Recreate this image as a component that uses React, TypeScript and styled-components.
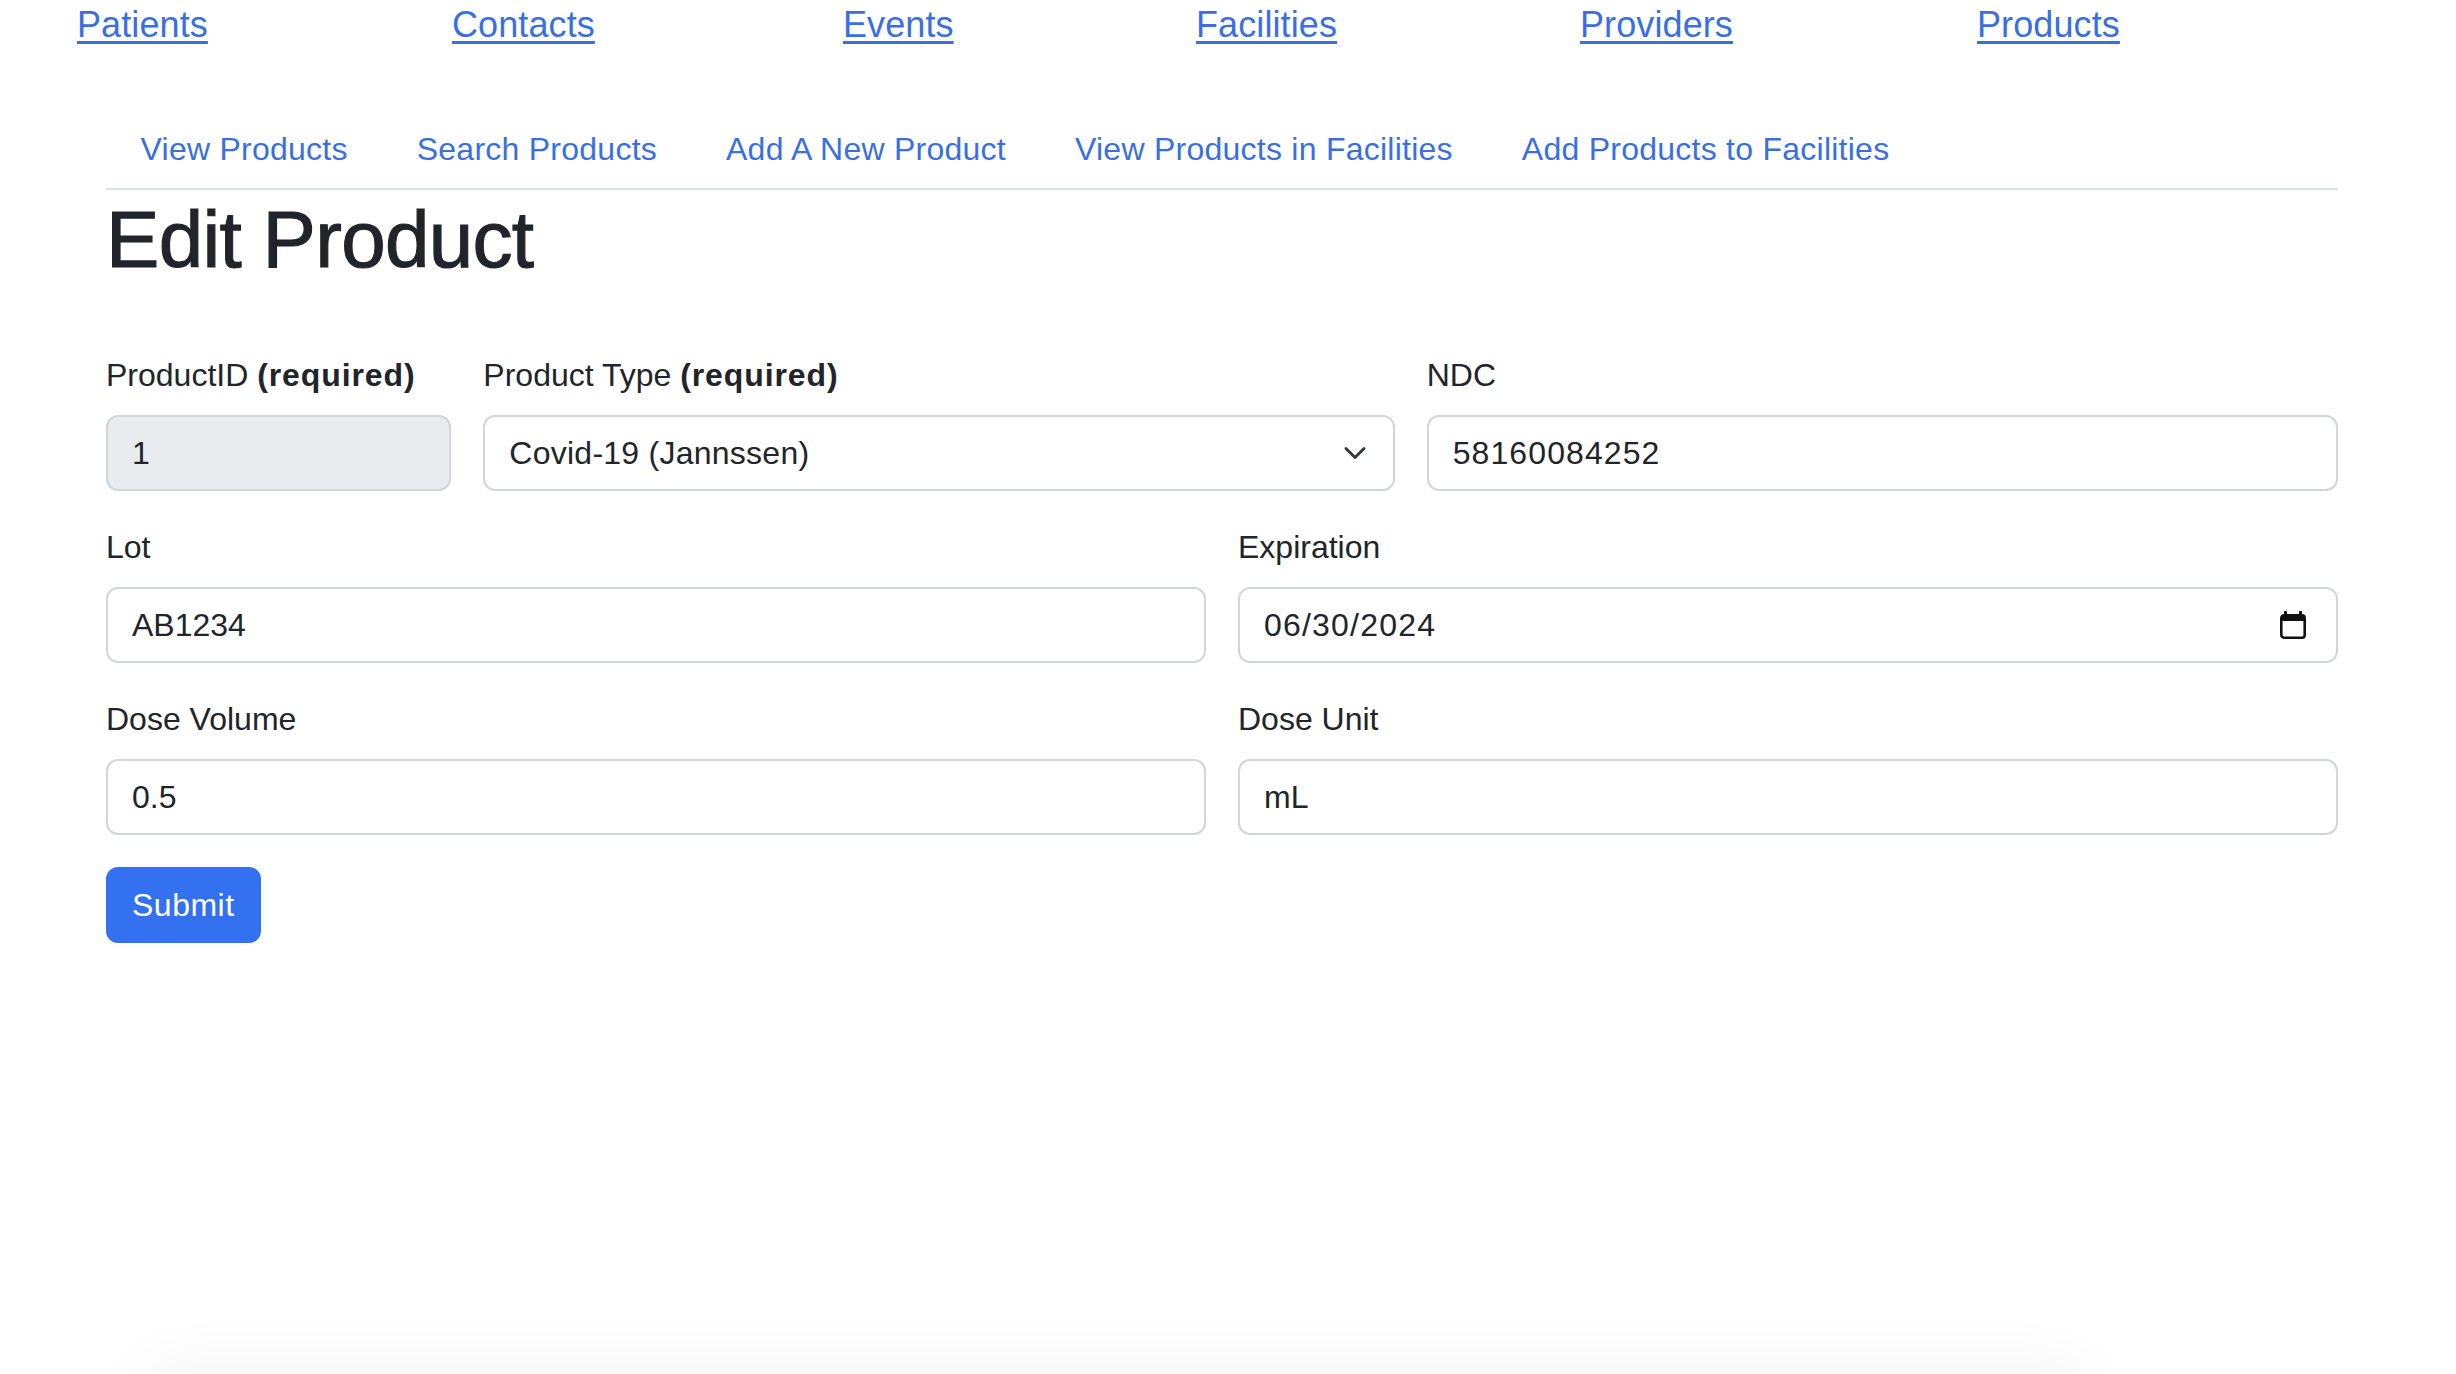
import React from "react";
import styled, { createGlobalStyle } from "styled-components";

const GlobalStyle = createGlobalStyle`
  html, body { margin: 0; padding: 0; background: #ffffff; }
  body {
    font-family: "Liberation Sans", Arial, sans-serif;
    color: #212529;
  }
  * { box-sizing: border-box; }
`;

const LINK = "#3a6fe2";

const TopNav = styled.nav`
  display: grid;
  grid-template-columns: 375px 391px 353px 384px 397px auto;
  padding: 2px 0 0 77px;
  height: 48px;
`;

const TopLink = styled.a`
  justify-self: start;
  font-size: 36px;
  line-height: 46px;
  letter-spacing: 0.1px;
  color: ${LINK};
  text-decoration: underline;
  text-decoration-thickness: 2.5px;
  text-underline-offset: 4px;
  cursor: pointer;
`;

const Container = styled.main`
  width: 2232px;
  margin-left: 106px;
`;

const Tabs = styled.nav`
  display: flex;
  margin-top: 61px;
  border-bottom: 2px solid #dee2e6;
`;

const Tab = styled.a`
  font-size: 32px;
  line-height: 48px;
  letter-spacing: 0.25px;
  padding: 16px 34.5px 15px;
  color: ${LINK};
  text-decoration: none;
  cursor: pointer;
`;

const Title = styled.h1`
  margin: 2px 0 63px;
  font-size: 80px;
  line-height: 96px;
  font-weight: 400;
  letter-spacing: -0.7px;
  -webkit-text-stroke: 1.1px #212529;
  color: #212529;
`;

const Form = styled.form`
  display: grid;
  grid-template-columns: repeat(12, 1fr);
  column-gap: 32px;
  row-gap: 32px;
`;

const Field = styled.div<{ $span: number }>`
  grid-column: span ${(p) => p.$span};
  display: flex;
  flex-direction: column;
`;

const Label = styled.label`
  font-size: 32px;
  line-height: 48px;
  margin-bottom: 16px;
  color: #212529;
`;

const Strong = styled.b`
  font-weight: 700;
  letter-spacing: 0.9px;
`;

const Control = styled.div`
  position: relative;
  height: 76px;
`;

const inputBase = `
  width: 100%;
  height: 76px;
  padding: 0 24px;
  border: 2px solid #d2d5d9;
  border-radius: 12px;
  font-family: "Liberation Sans", Arial, sans-serif;
  font-size: 32px;
  color: #212529;
  background: #ffffff;
  outline: none;
`;

const Input = styled.input<{ $tracking?: number }>`
  ${inputBase}
  letter-spacing: ${(p) => p.$tracking ?? 0}px;
  &:disabled {
    background: #e9ecef;
    color: #212529;
    -webkit-text-fill-color: #212529;
    opacity: 1;
  }
`;

const Select = styled.select`
  ${inputBase}
  letter-spacing: 0.25px;
  appearance: none;
  -webkit-appearance: none;
  padding-right: 80px;
`;

const Overlay = styled.span<{ $right: number }>`
  position: absolute;
  right: ${(p) => p.$right}px;
  top: 50%;
  transform: translateY(-50%);
  display: flex;
  pointer-events: none;
`;

const SubmitButton = styled.button`
  grid-column: 1 / -1;
  justify-self: start;
  height: 76px;
  padding: 0 24px;
  border: 2px solid #3471f1;
  border-radius: 12px;
  background: #3471f1;
  color: #ffffff;
  font-family: "Liberation Sans", Arial, sans-serif;
  font-size: 32px;
  letter-spacing: 0.5px;
  cursor: pointer;
`;

const BottomShade = styled.div`
  position: fixed;
  left: 150px;
  width: 1930px;
  bottom: -50px;
  height: 50px;
  border-radius: 50px;
  box-shadow: 0 0 60px 14px rgba(0, 0, 0, 0.045);
  pointer-events: none;
`;

const Chevron = () => (
  <svg width="24" height="24" viewBox="0 0 16 16" fill="none">
    <path
      d="m2 5 6 6 6-6"
      stroke="#343a40"
      strokeWidth="2"
      strokeLinecap="round"
      strokeLinejoin="round"
    />
  </svg>
);

const CalendarIcon = () => (
  <svg width="26" height="28" viewBox="0 0 26 28" fill="none">
    <rect x="4" y="0" width="3" height="5" rx="0.8" fill="#111" />
    <rect x="19" y="0" width="3" height="5" rx="0.8" fill="#111" />
    <rect x="1.3" y="4.3" width="23.4" height="22.4" rx="2.6" stroke="#111" strokeWidth="2.6" />
    <rect x="1" y="4" width="24" height="6" rx="2" fill="#111" />
  </svg>
);

const topLinks = ["Patients", "Contacts", "Events", "Facilities", "Providers", "Products"];
const tabs = [
  "View Products",
  "Search Products",
  "Add A New Product",
  "View Products in Facilities",
  "Add Products to Facilities",
];

export default function App() {
  return (
    <>
      <GlobalStyle />
      <TopNav>
        {topLinks.map((l) => (
          <TopLink key={l} href="#">
            {l}
          </TopLink>
        ))}
      </TopNav>
      <Container>
        <Tabs>
          {tabs.map((t) => (
            <Tab key={t}>{t}</Tab>
          ))}
        </Tabs>
        <Title>Edit Product</Title>
        <Form onSubmit={(e) => e.preventDefault()}>
          <Field $span={2}>
            <Label>
              ProductID <Strong>(required)</Strong>
            </Label>
            <Control>
              <Input defaultValue="1" disabled />
            </Control>
          </Field>
          <Field $span={5}>
            <Label>
              Product Type <Strong>(required)</Strong>
            </Label>
            <Control>
              <Select defaultValue="janssen">
                <option value="janssen">Covid-19 (Jannssen)</option>
              </Select>
              <Overlay $right={28}>
                <Chevron />
              </Overlay>
            </Control>
          </Field>
          <Field $span={5}>
            <Label>NDC</Label>
            <Control>
              <Input defaultValue="58160084252" $tracking={1.1} />
            </Control>
          </Field>
          <Field $span={6}>
            <Label>Lot</Label>
            <Control>
              <Input defaultValue="AB1234" />
            </Control>
          </Field>
          <Field $span={6}>
            <Label>Expiration</Label>
            <Control>
              <Input defaultValue="06/30/2024" $tracking={1.2} />
              <Overlay $right={32}>
                <CalendarIcon />
              </Overlay>
            </Control>
          </Field>
          <Field $span={6}>
            <Label>Dose Volume</Label>
            <Control>
              <Input defaultValue="0.5" />
            </Control>
          </Field>
          <Field $span={6}>
            <Label>Dose Unit</Label>
            <Control>
              <Input defaultValue="mL" />
            </Control>
          </Field>
          <SubmitButton type="submit">Submit</SubmitButton>
        </Form>
      </Container>
      <BottomShade />
    </>
  );
}
